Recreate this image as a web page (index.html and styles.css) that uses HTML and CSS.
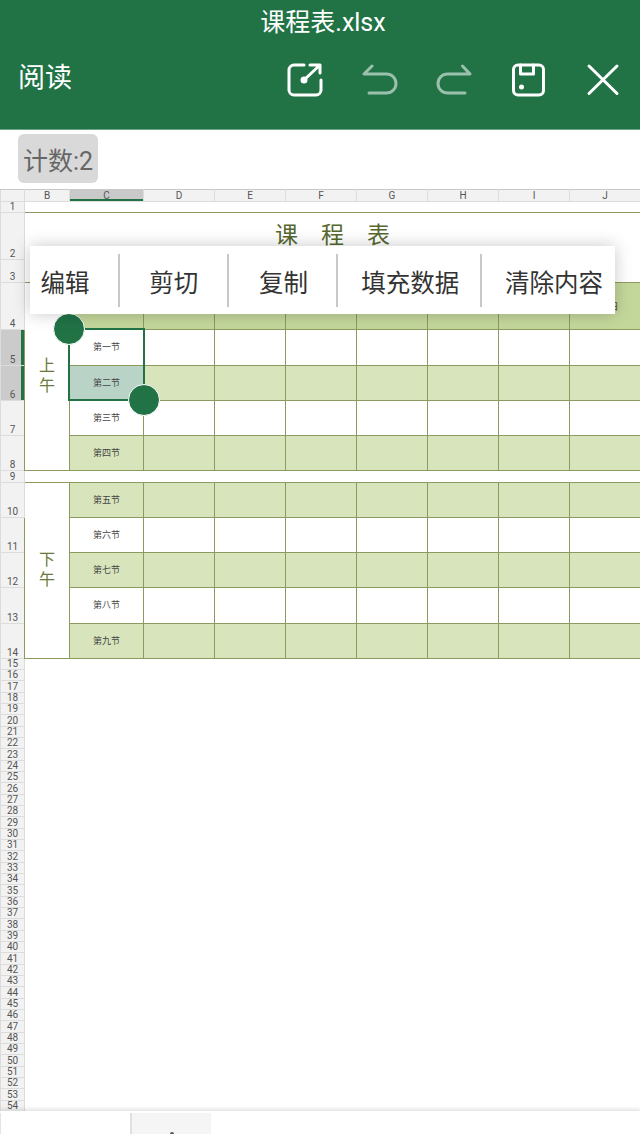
FILE: index.html
```html
<!DOCTYPE html>
<html lang="zh-CN">
<head>
    <meta charset="UTF-8">
    <meta name="viewport" content="width=device-width, initial-scale=1.0">
    <title>课程表.xlsx</title>
    <link rel="stylesheet" href="styles.css">
</head>
<body>
    <div class="page">
        <header class="topbar">
            <div class="file-name">课程表.xlsx</div>
            <div class="toolbar">
                <span class="mode">阅读</span>
                <div class="tools">
                    <svg class="tool" width="36" height="36" viewBox="0 0 36 36">
                        <path d="M17 3H7a5 5 0 0 0-5 5v20a5 5 0 0 0 5 5h22a5 5 0 0 0 5-5V18" />
                        <path d="M17 18L33 3M23 3h10v8" />
                        <circle class="fill" cx="17" cy="18" r="3.500" />
                    </svg>
                    <svg class="tool dim" width="36" height="36" viewBox="0 0 36 36">
                        <path d="M10 4L2 12H24.500a9.500 9.500 0 0 1 0 19H7" />
                    </svg>
                    <svg class="tool dim" width="36" height="36" viewBox="0 0 36 36">
                        <path d="M26.500 4L34 12H11.500a9.500 9.500 0 0 0 0 19H29" />
                    </svg>
                    <svg class="tool" width="36" height="36" viewBox="0 0 36 36">
                        <path d="M7 3h21a4.500 4.500 0 0 1 4.500 4.500v21a4.500 4.500 0 0 1-4.500 4.500H7a4.500 4.500 0 0 1-4.500-4.500v-21A4.500 4.500 0 0 1 7 3z" />
                        <path d="M9.500 3v9h13V3" />
                        <circle class="fill" cx="10.500" cy="25" r="2.500" />
                    </svg>
                    <svg class="tool" width="36" height="36" viewBox="0 0 36 36">
                        <path d="M4 4l28 27.500M32 4L4 31.500" />
                    </svg>
                </div>
            </div>
        </header>

        <div class="status">
            <span class="count">计数:2</span>
        </div>

        <main class="sheet">
            <table class="grid">
                <colgroup>
                    <col class="col-head">
                    <col class="col-b">
                    <col class="col-c">
                    <col class="col-day"><col class="col-day"><col class="col-day"><col class="col-day">
                    <col class="col-day"><col class="col-day"><col class="col-day">
                </colgroup>
                <thead>
                    <tr class="letters">
                        <th></th><th>B</th><th class="picked-col">C</th><th>D</th><th>E</th><th>F</th><th>G</th><th>H</th><th>I</th><th>J</th>
                    </tr>
                </thead>
                <tbody class="body">
                    <tr class="r-small"><th>1</th><td class="plain" colspan="9"></td></tr>
                    <tr class="r-title"><th>2</th><td class="title" colspan="9">课　程　表</td></tr>
                    <tr class="r-gap"><th>3</th><td class="cell gap" colspan="9"></td></tr>
                    <tr class="r-head">
                        <th>4</th>
                        <td class="cell half" rowspan="5">上<br>午</td>
                        <td class="cell head"></td>
                        <td class="cell head">星期一</td><td class="cell head">星期二</td><td class="cell head">星期三</td><td class="cell head">星期四</td>
                        <td class="cell head">星期五</td><td class="cell head">星期六</td><td class="cell head">星期日</td>
                    </tr>
                    <tr class="r-36"><th class="picked-row">5</th><td class="cell name">第一节</td><td class="cell"></td><td class="cell"></td><td class="cell"></td><td class="cell"></td><td class="cell"></td><td class="cell"></td><td class="cell"></td></tr>
                    <tr class="r-35 band"><th class="picked-row">6</th><td class="cell name picked">第二节</td><td class="cell"></td><td class="cell"></td><td class="cell"></td><td class="cell"></td><td class="cell"></td><td class="cell"></td><td class="cell"></td></tr>
                    <tr class="r-35"><th>7</th><td class="cell name">第三节</td><td class="cell"></td><td class="cell"></td><td class="cell"></td><td class="cell"></td><td class="cell"></td><td class="cell"></td><td class="cell"></td></tr>
                    <tr class="r-35 band"><th>8</th><td class="cell name">第四节</td><td class="cell"></td><td class="cell"></td><td class="cell"></td><td class="cell"></td><td class="cell"></td><td class="cell"></td><td class="cell"></td></tr>
                    <tr class="r-break"><th>9</th><td class="cell" colspan="9"></td></tr>
                    <tr class="r-35 band"><th>10</th><td class="cell half" rowspan="5">下<br>午</td><td class="cell name">第五节</td><td class="cell"></td><td class="cell"></td><td class="cell"></td><td class="cell"></td><td class="cell"></td><td class="cell"></td><td class="cell"></td></tr>
                    <tr class="r-35"><th>11</th><td class="cell name">第六节</td><td class="cell"></td><td class="cell"></td><td class="cell"></td><td class="cell"></td><td class="cell"></td><td class="cell"></td><td class="cell"></td></tr>
                    <tr class="r-35 band"><th>12</th><td class="cell name">第七节</td><td class="cell"></td><td class="cell"></td><td class="cell"></td><td class="cell"></td><td class="cell"></td><td class="cell"></td><td class="cell"></td></tr>
                    <tr class="r-36"><th>13</th><td class="cell name">第八节</td><td class="cell"></td><td class="cell"></td><td class="cell"></td><td class="cell"></td><td class="cell"></td><td class="cell"></td><td class="cell"></td></tr>
                    <tr class="r-35 band"><th>14</th><td class="cell name">第九节</td><td class="cell"></td><td class="cell"></td><td class="cell"></td><td class="cell"></td><td class="cell"></td><td class="cell"></td><td class="cell"></td></tr>
                </tbody>
                <tbody class="rest">
                    <tr><th>15</th></tr><tr><th>16</th></tr><tr><th>17</th></tr><tr><th>18</th></tr><tr><th>19</th></tr>
                    <tr><th>20</th></tr><tr><th>21</th></tr><tr><th>22</th></tr><tr><th>23</th></tr><tr><th>24</th></tr>
                    <tr><th>25</th></tr><tr><th>26</th></tr><tr><th>27</th></tr><tr><th>28</th></tr><tr><th>29</th></tr>
                    <tr><th>30</th></tr><tr><th>31</th></tr><tr><th>32</th></tr><tr><th>33</th></tr><tr><th>34</th></tr>
                    <tr><th>35</th></tr><tr><th>36</th></tr><tr><th>37</th></tr><tr><th>38</th></tr><tr><th>39</th></tr>
                    <tr><th>40</th></tr><tr><th>41</th></tr><tr><th>42</th></tr><tr><th>43</th></tr><tr><th>44</th></tr>
                    <tr><th>45</th></tr><tr><th>46</th></tr><tr><th>47</th></tr><tr><th>48</th></tr><tr><th>49</th></tr>
                    <tr><th>50</th></tr><tr><th>51</th></tr><tr><th>52</th></tr><tr><th>53</th></tr><tr><th>54</th></tr>
                </tbody>
            </table>

            <!-- selection box and its two drag handles -->
            <div class="selection">
                <span class="handle handle-start"></span>
                <span class="handle handle-end"></span>
            </div>

            <div class="menu">
                <span class="menu-item item-edit">编辑</span>
                <span class="menu-item item-cut">剪切</span>
                <span class="menu-item item-copy">复制</span>
                <span class="menu-item item-fill">填充数据</span>
                <span class="menu-item item-clear">清除内容</span>
            </div>
        </main>

        <footer class="tabs">
            <div class="tab tab-sheet"></div>
            <div class="tab tab-add">
                <svg width="20" height="20" viewBox="0 0 20 20"><path d="M10 5v14M2 11h16" /></svg>
            </div>
        </footer>
    </div>
</body>
</html>
```

FILE: styles.css
```css
* {
    box-sizing: border-box;
}

body {
    margin: 0;
    background-color: #fff;
    font-family: Roboto, "Noto Sans CJK SC", sans-serif;
}

.page {
    display: flex;
    flex-direction: column;
    width: 640px;
    height: 1134px;
    overflow: hidden;
}

/* top green bar */
.topbar {
    flex: none;
    height: 130px;
    background-color: #217346;
    border-bottom: 1px solid #6fa488;
    color: #fff;
}

.file-name {
    height: 44px;
    line-height: 45px;
    text-align: center;
    font-size: 25px;
    padding-left: 6px;
}

.toolbar {
    display: flex;
    align-items: center;
    justify-content: space-between;
    height: 72px;
    padding: 0 19px 0 18px;
}

.mode {
    font-size: 27px;
    position: relative;
    top: -5px;
}

.tools {
    display: flex;
    gap: 38.500px;
}

.tool {
    fill: none;
    stroke: #fff;
    stroke-width: 3;
    stroke-linecap: round;
    stroke-linejoin: round;
}

.tool .fill {
    fill: #fff;
    stroke: none;
}

.tool.dim {
    opacity: .55;
}

/* count chip */
.status {
    flex: none;
    height: 59px;
    padding: 4px 0 0 18px;
}

.count {
    display: inline-flex;
    align-items: center;
    justify-content: center;
    width: 80px;
    height: 49px;
    border-radius: 6px;
    background-color: #d9d9d9;
    color: #666;
    font-size: 25px;
}

/* spreadsheet */
.sheet {
    position: relative;
    flex: 1;
    overflow: hidden;
}

.grid {
    table-layout: fixed;
    border-collapse: collapse;
    width: 641px;
}

.col-head { width: 24px; }
.col-b { width: 45px; }
.col-c { width: 74px; }
.col-day { width: 71px; }

.grid th {
    padding: 0;
    background-color: #f2f2f2;
    border: 1px solid #dcdcdc;
    color: #555;
    font-size: 10px;
    font-weight: 400;
    line-height: 10px;
    vertical-align: bottom;
    text-align: center;
}

.letters {
    height: 12px;
}

.letters th {
    vertical-align: middle;
    border-top-color: #c8c8c8;
    padding-top: 1px;
}

.letters .picked-col {
    background-color: #c9c9c9;
    box-shadow: inset 0 -2px 0 #217346;
}

.grid .picked-row {
    background-color: #cbcbcb;
    box-shadow: inset -3px 0 0 #217346;
}

.r-small { height: 11px; }
.r-break { height: 12px; }
.r-title { height: 47px; }
.r-gap { height: 23px; }
.r-head { height: 47px; }
.r-36 { height: 36px; }
.r-35 { height: 35px; }

.rest tr { height: 11px; }
.rest tr:first-child { height: 10px; }
.rest tr:nth-child(3n) { height: 12px; }

.cell {
    padding: 0;
    border: 1px solid #8b9a5e;
    text-align: center;
    vertical-align: middle;
    color: #444;
    font-size: 9px;
}

.title {
    border: 1px solid #8b9a5e;
    border-bottom: none;
    padding: 0 0 6px;
    text-align: center;
    color: #56682e;
    font-size: 23px;
}

.gap {
    border-top: none;
}

.band .cell {
    background-color: #d8e4bc;
}

.band .picked {
    background-color: #b9d4c7;
}

.half,
.band .half {
    background-color: #fff;
    padding-bottom: 2px;
    color: #6b7a3a;
    font-size: 16px;
    line-height: 20px;
}

.head {
    background-color: #c4d79b;
}

.name {
    padding-bottom: 2px;
}

/* floats over the grid */
.selection {
    position: absolute;
    left: 68px;
    top: 139px;
    width: 77px;
    height: 73px;
    border: 2.500px solid #217346;
}

.handle {
    position: absolute;
    width: 32px;
    height: 32px;
    border: 1.500px solid #fff;
    border-radius: 50%;
    background-color: #217346;
}

.handle-start {
    left: -17px;
    top: -17px;
}

.handle-end {
    right: -17px;
    bottom: -17px;
}

.menu {
    position: absolute;
    left: 30px;
    top: 57px;
    display: flex;
    width: 585px;
    height: 68px;
    background-color: #fff;
    box-shadow: 0 0 16px rgba(0, 0, 0, .22);
}

.menu-item {
    display: flex;
    align-items: center;
    justify-content: center;
    padding-top: 2px;
    color: #333;
    font-size: 24.500px;
    background: linear-gradient(#c8c8c8, #c8c8c8) right center / 2px 53px no-repeat;
}

.item-edit { width: 90px; padding-right: 20px; }
.item-cut { width: 109px; padding-right: 1px; }
.item-copy { width: 110px; }
.item-fill { width: 144px; }
.item-clear { width: 133px; padding-left: 11px; background: none; }

/* sheet tabs */
.tabs {
    flex: none;
    display: flex;
    height: 23px;
    padding-top: 2px;
    background-color: #fff;
    box-shadow: 0 -2px 4px rgba(0, 0, 0, .12);
    position: relative;
}

.tab-sheet {
    width: 132px;
    border-left: 1px solid #e4e4e4;
    border-right: 2px solid #e0e0e0;
}

.tab-add {
    display: flex;
    justify-content: center;
    width: 79px;
    padding-top: 16px;
    background-color: #f5f5f5;
    overflow: hidden;
}

.tab-add path {
    fill: none;
    stroke: #555;
    stroke-width: 4;
    stroke-linecap: round;
}
```
